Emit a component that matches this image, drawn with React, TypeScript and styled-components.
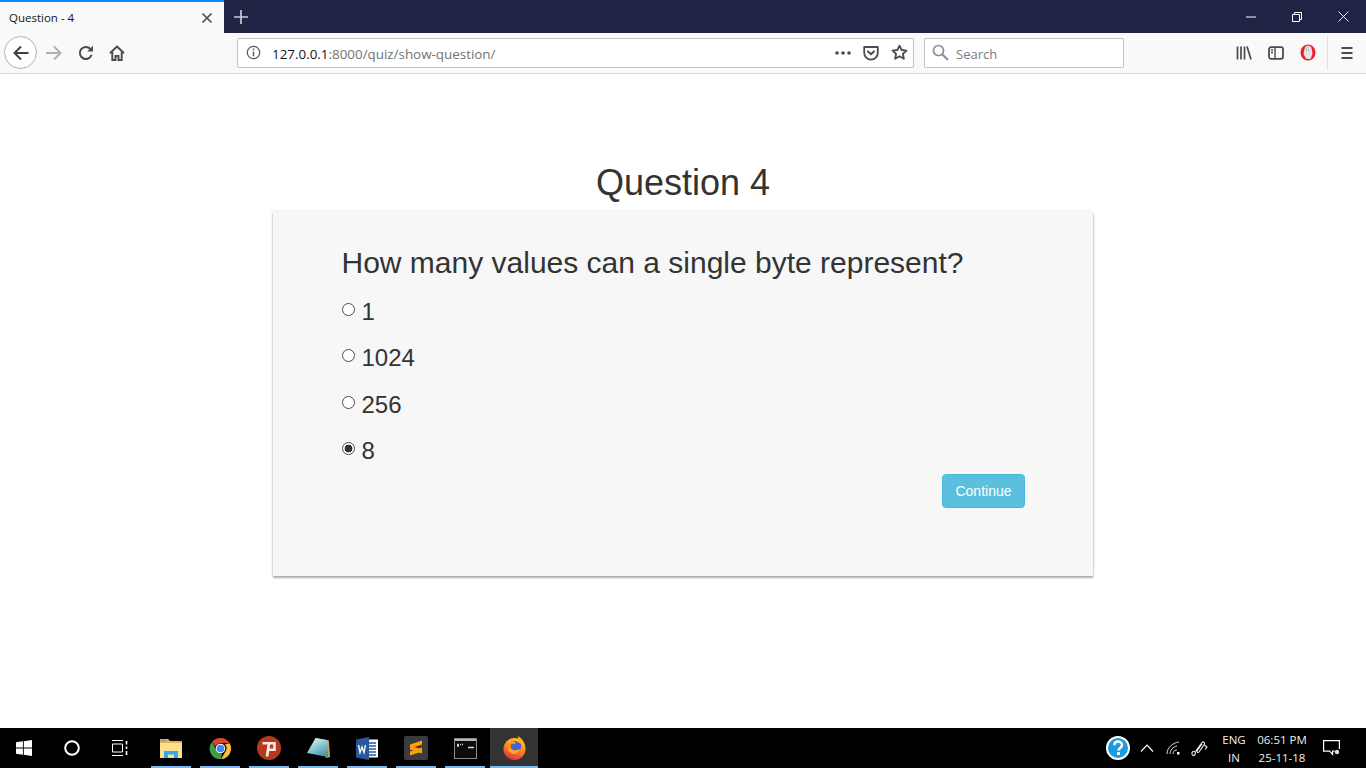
import styled, { createGlobalStyle } from 'styled-components';

const GlobalStyle = createGlobalStyle`
  html, body {
    margin: 0;
    padding: 0;
    height: 100%;
    overflow: hidden;
  }
  * {
    box-sizing: border-box;
  }
`;

const Screen = styled.div`
  width: 1366px;
  height: 768px;
  display: flex;
  flex-direction: column;
  background: #ffffff;
  font-family: 'Liberation Sans', Arial, sans-serif;
`;

// browser chrome
const TabBar = styled.div`
  height: 33px;
  display: flex;
  background: #1f2444;
`;

const Tab = styled.div`
  width: 224px;
  display: flex;
  align-items: center;
  justify-content: space-between;
  padding: 0 11px 0 9px;
  background: #f9f9fa;
  border-top: 2px solid #0a84ff;
  font-family: 'Open Sans', 'Noto Sans', sans-serif;
  font-size: 11.5px;
  color: #15141a;
`;

const NewTab = styled.div`
  width: 34px;
  display: flex;
  align-items: center;
  justify-content: center;
`;

const WindowControls = styled.div`
  margin-left: auto;
  display: flex;
`;

const WindowButton = styled.div`
  width: 46px;
  display: flex;
  align-items: center;
  justify-content: center;
`;

const NavBar = styled.div`
  height: 41px;
  display: flex;
  align-items: center;
  background: #f9f9fa;
  border-bottom: 1px solid #dcdcdd;
  padding: 0 0 1px 4px;
`;

const BackButton = styled.div`
  width: 33px;
  height: 33px;
  flex-shrink: 0;
  border-radius: 50%;
  border: 1px solid #b1b1b3;
  background: #ffffff;
  display: flex;
  align-items: center;
  justify-content: center;
`;

const NavIcon = styled.div<{ $width: number }>`
  width: ${(p) => p.$width}px;
  flex-shrink: 0;
  display: flex;
  align-items: center;
  justify-content: center;
`;

const UrlBar = styled.div`
  width: 677px;
  height: 30px;
  flex-shrink: 0;
  margin-left: 104px;
  display: flex;
  align-items: center;
  background: #ffffff;
  border: 1px solid #c2c2c4;
  border-radius: 2px;
  padding-left: 8px;
  font-family: 'Open Sans', 'Noto Sans', sans-serif;
  font-size: 13.4px;
`;

const UrlText = styled.div`
  margin-left: 11px;
  padding-top: 2px;
  color: #737373;
  flex: 1;
  b {
    font-weight: 400;
    color: #15141a;
  }
`;

const SearchBar = styled.div`
  width: 200px;
  height: 30px;
  flex-shrink: 0;
  margin-left: 10px;
  display: flex;
  align-items: center;
  gap: 7px;
  background: #ffffff;
  border: 1px solid #c2c2c4;
  border-radius: 2px;
  padding: 0 7px;
  font-family: 'Open Sans', 'Noto Sans', sans-serif;
  font-size: 13px;
  color: #7b7b7f;
  span {
    padding-top: 2px;
  }
`;

const ToolGroup = styled.div`
  margin-left: 104px;
  display: flex;
  align-items: center;
`;

const ToolDivider = styled.div`
  width: 1px;
  height: 34px;
  background: #e0e0e1;
  margin: 0 3px;
`;

// page content
const Page = styled.main`
  flex: 1;
  display: flex;
  flex-direction: column;
  align-items: center;
  padding-top: 84px;
  color: #333333;
`;

const Title = styled.h2`
  margin: 0 0 4px;
  font-size: 36px;
  font-weight: 500;
  line-height: 50px;
`;

const Card = styled.section`
  width: 820px;
  height: 364px;
  display: flex;
  flex-direction: column;
  background: #f7f7f7;
  box-shadow: 0 2px 2px rgba(0, 0, 0, 0.3), 0 0 3px rgba(0, 0, 0, 0.15);
  padding: 31px 68px 0 69px;
`;

const QuestionText = styled.h3`
  margin: 0 0 10px -0.5px;
  font-size: 30px;
  font-weight: 500;
  line-height: 40px;
`;

const Option = styled.label`
  height: 46.3px;
  display: flex;
  align-items: flex-start;
  gap: 6.5px;
  font-size: 24px;
  line-height: 38px;
`;

const Radio = styled.input`
  appearance: none;
  width: 13px;
  height: 13px;
  margin: 10px 0 0;
  border: 1px solid #4c4c4c;
  border-radius: 50%;
  background: #ffffff;
  &:checked {
    background: radial-gradient(circle, #333333 0 3.6px, #ffffff 4.2px);
  }
`;

const Actions = styled.div`
  display: flex;
  justify-content: flex-end;
  margin-top: -4px;
`;

const ContinueButton = styled.button`
  width: 83px;
  height: 34px;
  background: #5bc0de;
  border: 1px solid #46b8da;
  border-radius: 4px;
  color: #ffffff;
  font-family: 'Liberation Sans', Arial, sans-serif;
  font-size: 14px;
  padding: 0;
`;

// windows taskbar
const Taskbar = styled.footer`
  height: 40px;
  display: flex;
  background: #000000;
  color: #ffffff;
`;

const SystemButton = styled.div`
  width: 48px;
  display: flex;
  align-items: center;
  justify-content: center;
`;

const AppList = styled.div`
  display: flex;
  gap: 1px;
  margin-left: 3px;
`;

const AppSlot = styled.div<{ $active?: boolean }>`
  position: relative;
  width: 48px;
  display: flex;
  align-items: center;
  justify-content: center;
  background: ${(p) => (p.$active ? '#333333' : 'transparent')};
  &::after {
    content: '';
    position: absolute;
    bottom: 0;
    height: 2px;
    left: ${(p) => (p.$active ? 0 : 4)}px;
    right: ${(p) => (p.$active ? 0 : 4)}px;
    background: #76b9ed;
  }
`;

const Tray = styled.div`
  margin-left: auto;
  padding-right: 10px;
  display: flex;
  align-items: center;
`;

const TrayIcon = styled.div<{ $width: number }>`
  width: ${(p) => p.$width}px;
  display: flex;
  align-items: center;
  justify-content: center;
`;

const TrayText = styled.div<{ $width: number }>`
  width: ${(p) => p.$width}px;
  display: flex;
  flex-direction: column;
  align-items: center;
  gap: 1px;
  font-family: 'Open Sans', 'Noto Sans', sans-serif;
  font-size: 11.5px;
  line-height: 17px;
  color: #f0f0f0;
`;

const options = [
  { label: '1', checked: false },
  { label: '1024', checked: false },
  { label: '256', checked: false },
  { label: '8', checked: true },
];

const dark = '#4a4a4f';

const BackIcon = () => (
  <svg width="18" height="18" viewBox="0 0 18 18" fill="none" stroke="#3f3f44" strokeWidth="2">
    <path d="M16.5 9H2.5M9 2.5 2.5 9 9 15.5" />
  </svg>
);

const ForwardIcon = () => (
  <svg width="18" height="18" viewBox="0 0 18 18" fill="none" stroke="#b1b1b3" strokeWidth="2">
    <path d="M1 9h14M9 2.5 15.5 9 9 15.5" />
  </svg>
);

const ReloadIcon = () => (
  <svg width="16" height="16" viewBox="0 0 16 16" fill="none" stroke={dark} strokeWidth="2">
    <path d="M13.6 9.8A6 6 0 1 1 12.4 4" />
    <path d="M15 .8v5.7H9.3z" fill={dark} stroke="none" />
  </svg>
);

const HomeIcon = () => (
  <svg width="16" height="16" viewBox="0 0 16 16" fill="none" stroke={dark} strokeWidth="2">
    <path d="M1 8.2 8 1.6l7 6.6" strokeLinejoin="round" />
    <path d="M3.3 7v8h3.2v-4h3v4h3.2V7" strokeWidth="1.9" />
  </svg>
);

const InfoIcon = () => (
  <svg width="15" height="15" viewBox="0 0 15 15" fill="none" stroke="#5c5c61" strokeWidth="1.3">
    <circle cx="7.5" cy="7.5" r="6.2" />
    <path d="M7.5 6.6v4.6M7.5 3.6v1.6" strokeWidth="1.5" />
  </svg>
);

const PocketIcon = () => (
  <svg width="16" height="16" viewBox="0 0 16 16" fill="none" stroke={dark} strokeWidth="1.8">
    <path d="M1.2 2h13.6v5.8a6.8 6.8 0 0 1-13.6 0z" strokeLinejoin="round" />
    <path d="m5 6.4 3 2.8 3-2.8" strokeLinecap="round" strokeWidth="2" />
  </svg>
);

const StarIcon = () => (
  <svg width="17" height="17" viewBox="0 0 17 17" fill="none" stroke={dark} strokeWidth="1.8">
    <path d="M8.5 1.6 10.6 6l4.9.6-3.6 3.3 1 4.9-4.4-2.5-4.4 2.5 1-4.9L1.5 6.6 6.4 6z" strokeLinejoin="round" />
  </svg>
);

const SearchIcon = () => (
  <svg width="17" height="17" viewBox="0 0 17 17" fill="none" stroke="#8f8f93" strokeWidth="1.7">
    <circle cx="6.5" cy="6.5" r="5" />
    <path d="m10.2 10.2 5.8 5.8" strokeWidth="2" />
  </svg>
);

const LibraryIcon = () => (
  <svg width="16" height="16" viewBox="0 0 16 16" fill="none" stroke={dark} strokeWidth="1.7">
    <path d="M1.5 1.5v13M5 1.5v13M8.5 1.5v13M11 1.5l4 13" />
  </svg>
);

const SidebarIcon = () => (
  <svg width="16" height="16" viewBox="0 0 16 16" fill="none" stroke={dark} strokeWidth="1.8">
    <rect x="1" y="2.2" width="14" height="11.6" rx="2" />
    <path d="M7 2.5v11M3 5h2M3 7.5h2" strokeWidth="1.4" />
  </svg>
);

const OperaIcon = () => (
  <svg width="16" height="17" viewBox="0 0 16 17">
    <ellipse cx="8" cy="8.5" rx="7.5" ry="8" fill="#ee1c24" />
    <path d="M3.8 7.5 5 3.5l1-1.700h3.500l1.800 1.700 1 4v3L10.500 15h-4L3.800 11z" fill="#e4e4e6" />
    <path d="M6.500 2.500v5M8.500 2.500v5" stroke="#b8b8ba" strokeWidth=".8" />
  </svg>
);

const MenuIcon = () => (
  <svg width="14" height="14" viewBox="0 0 14 14" fill="none" stroke={dark} strokeWidth="1.8">
    <path d="M1.5 2h11M1.5 7h11M1.5 12h11" />
  </svg>
);

const WindowsLogo = () => (
  <svg width="16" height="16" viewBox="0 0 16 16" fill="#ffffff">
    <path d="M0 2.300 6.900 1.300V7.600H0zM7.800 1.200 16 0v7.600H7.800zM0 8.400h6.900v6.300L0 13.700zM7.800 8.400H16V16l-8.200-1.200z" />
  </svg>
);

const TaskViewIcon = () => (
  <svg width="16" height="16" viewBox="0 0 16 16" fill="none" stroke="#ffffff" strokeWidth="1">
    <path d="M0 .5h11M0 15.500h11M.5 4h10v8H.5z" />
    <path d="M14.500 1v3.500M14.500 6.500V9M14.500 11v4" strokeWidth="1.600" />
  </svg>
);

const ExplorerIcon = () => (
  <svg width="22" height="19" viewBox="0 0 22 19">
    <path d="M0 0h8l2 2h12v17H0z" fill="#e3b343" />
    <path d="M1 .8h5v1.400H1z" fill="#5aa7d8" />
    <path d="M0 4h22v15H0z" fill="#fde08f" />
    <path d="M4 19v-7h14v7h-4v-3.500H8V19z" fill="#35a9e8" />
  </svg>
);

const ChromeIcon = () => (
  <svg width="23" height="23" viewBox="0 0 48 48">
    <path d="M24 2a22 22 0 0 1 19.100 11H24a11 11 0 0 0-10.200 6.800L6.600 9.800A22 22 0 0 1 24 2z" fill="#db4437" />
    <path d="M43.100 13A22 22 0 0 1 25.400 46l9.200-16.400A11 11 0 0 0 33 15.500z" fill="#fbc02d" />
    <path d="M25.400 46A22 22 0 0 1 6.600 9.800l9.500 18.700A11 11 0 0 0 27 34.500z" fill="#3f9c47" />
    <circle cx="24" cy="24" r="10" fill="#ffffff" />
    <circle cx="24" cy="24" r="8" fill="#4285f4" />
  </svg>
);

const PsiphonIcon = () => (
  <svg width="24" height="24" viewBox="0 0 24 24">
    <circle cx="12" cy="12" r="12" fill="#b5391f" />
    <path d="M5.500 7.200h12v6.600H11M12 7.200 10 20.500" fill="none" stroke="#f8ebe2" strokeWidth="2.600" />
  </svg>
);

const NotepadIcon = () => (
  <svg width="23" height="20" viewBox="0 0 23 20">
    <defs>
      <linearGradient id="pad" x1="0.2" y1="0" x2="0.8" y2="1">
        <stop offset="0" stopColor="#e2f4f4" />
        <stop offset="0.55" stopColor="#7fc0cc" />
        <stop offset="1" stopColor="#3f8fa3" />
      </linearGradient>
    </defs>
    <path d="M8.500 0 22 2.500 23 19 19 20z" fill="#c6a35a" />
    <path d="M8.500 0 20.500 2 21 19 0 15z" fill="url(#pad)" />
  </svg>
);

const WordIcon = () => (
  <svg width="22" height="23" viewBox="0 0 22 23">
    <path d="M9 2.500h13v18H9z" fill="#ffffff" />
    <path d="M12 6h8M12 9h8M12 12h8M12 15h8M12 18h8" stroke="#2b579a" strokeWidth="1.500" />
    <path d="M0 2.500 13 0v23L0 20.500z" fill="#2b579a" />
    <path d="m2.500 8 1.500 7.500L6 10l2 5.500L9.500 8" fill="none" stroke="#ffffff" strokeWidth="1.300" />
  </svg>
);

const SublimeIcon = () => (
  <svg width="24" height="24" viewBox="0 0 24 24">
    <rect width="24" height="24" rx="2" fill="#3b3b3b" />
    <path d="M6 8.500 18 4.500v4L6 12.500zM6 9.500l12 4v4l-12-4zM6 15.500l12-4v4L6 19.500z" fill="#ff9d0a" />
  </svg>
);

const CmdIcon = () => (
  <svg width="23" height="21" viewBox="0 0 23 21">
    <rect x=".5" y=".5" width="22" height="20" fill="#0c0c0c" stroke="#8c8c8c" />
    <rect x="1" y="1" width="21" height="2" fill="#b8b8b8" />
    <path d="M3 6.500h2M6 6.500h1M8 6.500h1M3 8h2M14 9.500h6" stroke="#d8d8d8" strokeWidth="1.300" />
  </svg>
);

const FirefoxIcon = () => (
  <svg width="23" height="24" viewBox="0 0 23 24">
    <defs>
      <linearGradient id="fx" x1="0.7" y1="0" x2="0.3" y2="1">
        <stop offset="0" stopColor="#ffcb2e" />
        <stop offset="0.45" stopColor="#ff8a1f" />
        <stop offset="1" stopColor="#e6244d" />
      </linearGradient>
    </defs>
    <circle cx="11.500" cy="13" r="11" fill="url(#fx)" />
    <path d="M15 0c3.500 2 6 5 7 9l-6-1z" fill="#ffb01f" />
    <path d="M8 5h5l5 3c1 4-1 7-4 8-3 .5-5-.5-6-3z" fill="#4a5fd0" />
    <path d="M5.500 9c1.500 5 7.500 7 11.500 3.500-1 5-6.500 7-9.500 4.500S5 12 5.500 9z" fill="#ffa52a" />
    <path d="M8 4c2 .5 4 1.500 5 3.500-2 .5-4 .5-5.500 0z" fill="#ff9a1f" />
  </svg>
);

const HelpIcon = () => (
  <svg width="24" height="24" viewBox="0 0 24 24">
    <circle cx="12" cy="12" r="11" fill="#1a9be0" stroke="#ffffff" strokeWidth="2" />
    <path d="M8.400 9.300c0-5 7.600-4.800 7.600-.4 0 3-3.500 3-3.500 5.600" fill="none" stroke="#ffffff" strokeWidth="2.500" />
    <rect x="11" y="16" width="3" height="3" fill="#ffffff" />
  </svg>
);

const ChevronIcon = () => (
  <svg width="14" height="8" viewBox="0 0 14 8" fill="none" stroke="#ffffff" strokeWidth="1.200">
    <path d="M1 7.500 7 1.200l6 6.300" />
  </svg>
);

const WifiIcon = () => (
  <svg width="15" height="14" viewBox="0 0 15 14" fill="none" stroke="#d8d8d8">
    <path d="M1 13C1 7 6 2 13 1M4 13c0-4 3-7 7-8M7 13c0-2 1-4 4-4" />
    <rect x="11" y="11" width="2.500" height="2.500" fill="#ffffff" stroke="none" />
  </svg>
);

const PenIcon = () => (
  <svg width="17" height="17" viewBox="0 0 17 17" fill="none" stroke="#f0f0f0" strokeWidth="1.100">
    <path d="M1.500 15c-1.500-2 .5-4.500 2-3.500 1.500.8 1 3-.5 4-.6.300-1.100 0-1.500-.5z" />
    <path d="M4.500 11.500 11 2.500c1-1.200 3-.2 2.500 1.500l-5.500 8c-1 1.200-2.500 0-1.800-1.200l4.800-6.800" />
    <path d="m13.500 5 2.500 2-2 2.500" />
  </svg>
);

const NotificationIcon = () => (
  <svg width="18" height="16" viewBox="0 0 18 16" fill="none" stroke="#ffffff" strokeWidth="1.200">
    <path d="M16.400 9V.6H.6v10.500h6l3 3.300v-3.300h2" />
    <circle cx="14" cy="12" r="2.200" fill="#dddddd" stroke="none" />
  </svg>
);

const App = () => {
  return (
    <>
      <GlobalStyle />
      <Screen>
        <TabBar>
          <Tab>
            <span>Question - 4</span>
            <svg width="12" height="12" viewBox="0 0 12 12" fill="none" stroke={dark} strokeWidth="1.600">
              <path d="m1.500 1.500 9 9M10.500 1.500l-9 9" />
            </svg>
          </Tab>
          <NewTab>
            <svg width="14" height="14" viewBox="0 0 14 14" fill="none" stroke="#c8cad4" strokeWidth="1.700">
              <path d="M7 0v14M0 7h14" />
            </svg>
          </NewTab>
          <WindowControls>
            <WindowButton>
              <svg width="10" height="2" viewBox="0 0 10 2" stroke="#ffffff">
                <path d="M0 1h10" />
              </svg>
            </WindowButton>
            <WindowButton>
              <svg width="10" height="10" viewBox="0 0 10 10" fill="none" stroke="#ffffff">
                <path d="M.5 2.500h7v7h-7zM2.500 2.500v-2h7v7h-2" />
              </svg>
            </WindowButton>
            <WindowButton>
              <svg width="11" height="11" viewBox="0 0 11 11" fill="none" stroke="#ffffff" strokeWidth=".9">
                <path d="m.5.5 10 10M10.500.5l-10 10" />
              </svg>
            </WindowButton>
          </WindowControls>
        </TabBar>
        <NavBar>
          <BackButton>
            <BackIcon />
          </BackButton>
          <NavIcon $width={33}>
            <ForwardIcon />
          </NavIcon>
          <NavIcon $width={31}>
            <ReloadIcon />
          </NavIcon>
          <NavIcon $width={32}>
            <HomeIcon />
          </NavIcon>
          <UrlBar>
            <InfoIcon />
            <UrlText>
              <b>127.0.0.1</b>:8000/quiz/show-question/
            </UrlText>
            <NavIcon $width={28}>
              <svg width="16" height="4" viewBox="0 0 16 4" fill={dark}>
                <circle cx="2" cy="2" r="1.800" />
                <circle cx="8" cy="2" r="1.800" />
                <circle cx="14" cy="2" r="1.800" />
              </svg>
            </NavIcon>
            <NavIcon $width={28}>
              <PocketIcon />
            </NavIcon>
            <NavIcon $width={28}>
              <StarIcon />
            </NavIcon>
          </UrlBar>
          <SearchBar>
            <SearchIcon />
            <span>Search</span>
          </SearchBar>
          <ToolGroup>
            <NavIcon $width={32}>
              <LibraryIcon />
            </NavIcon>
            <NavIcon $width={32}>
              <SidebarIcon />
            </NavIcon>
            <NavIcon $width={32}>
              <OperaIcon />
            </NavIcon>
            <ToolDivider />
            <NavIcon $width={32}>
              <MenuIcon />
            </NavIcon>
          </ToolGroup>
        </NavBar>
        <Page>
          <Title>Question 4</Title>
          <Card>
            <QuestionText>How many values can a single byte represent?</QuestionText>
            {options.map((option) => (
              <Option key={option.label}>
                <Radio type="radio" name="answer" defaultChecked={option.checked} />
                {option.label}
              </Option>
            ))}
            <Actions>
              <ContinueButton>Continue</ContinueButton>
            </Actions>
          </Card>
        </Page>
        <Taskbar>
          <SystemButton>
            <WindowsLogo />
          </SystemButton>
          <SystemButton>
            <svg width="16" height="16" viewBox="0 0 16 16" fill="none" stroke="#ffffff" strokeWidth="2">
              <circle cx="8" cy="8" r="6.800" />
            </svg>
          </SystemButton>
          <SystemButton>
            <TaskViewIcon />
          </SystemButton>
          <AppList>
            <AppSlot>
              <ExplorerIcon />
            </AppSlot>
            <AppSlot>
              <ChromeIcon />
            </AppSlot>
            <AppSlot>
              <PsiphonIcon />
            </AppSlot>
            <AppSlot>
              <NotepadIcon />
            </AppSlot>
            <AppSlot>
              <WordIcon />
            </AppSlot>
            <AppSlot>
              <SublimeIcon />
            </AppSlot>
            <AppSlot>
              <CmdIcon />
            </AppSlot>
            <AppSlot $active>
              <FirefoxIcon />
            </AppSlot>
          </AppList>
          <Tray>
            <TrayIcon $width={32}>
              <HelpIcon />
            </TrayIcon>
            <TrayIcon $width={26}>
              <ChevronIcon />
            </TrayIcon>
            <TrayIcon $width={26}>
              <WifiIcon />
            </TrayIcon>
            <TrayIcon $width={26}>
              <PenIcon />
            </TrayIcon>
            <TrayText $width={44}>
              <span>ENG</span>
              <span>IN</span>
            </TrayText>
            <TrayText $width={52}>
              <span>06:51 PM</span>
              <span>25-11-18</span>
            </TrayText>
            <TrayIcon $width={48}>
              <NotificationIcon />
            </TrayIcon>
          </Tray>
        </Taskbar>
      </Screen>
    </>
  );
};

export default App;
